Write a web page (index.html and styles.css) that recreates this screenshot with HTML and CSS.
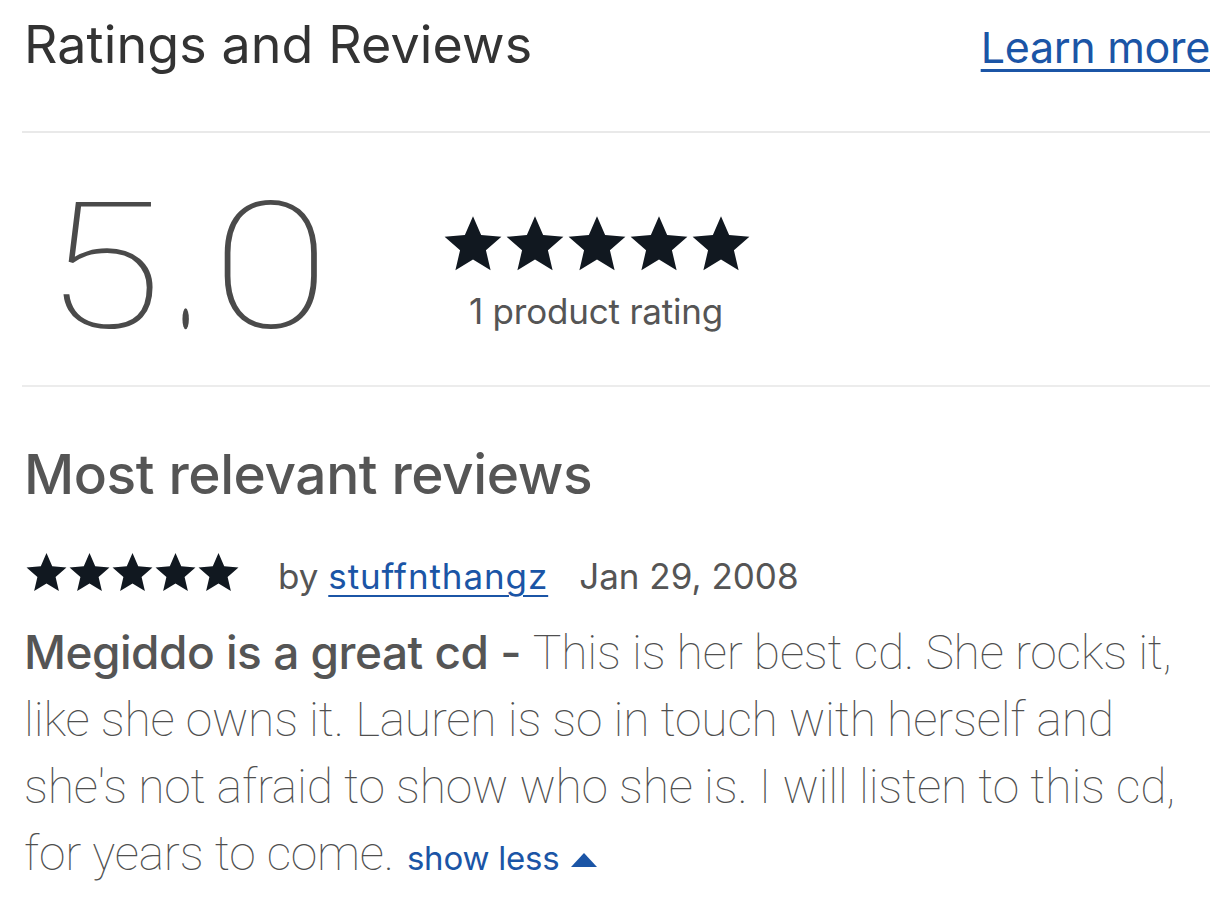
FILE: index.html
```html
<!DOCTYPE html>
<html lang="en">
<head>
<meta charset="utf-8">
<title>Ratings and Reviews</title>
<link rel="stylesheet" href="styles.css">
</head>
<body>
<main class="page">
  <header class="head">
    <h2 class="title">Ratings and Reviews</h2>
    <a class="learn" href="#">Learn more</a>
  </header>
  <section class="summary">
    <div class="score">5<span class="dot">.</span>0</div>
    <div class="overall">
      <div class="stars big">
        <svg viewBox="0 0 24 24"><path d="M12 1.6l3.05 7.05 7.6.65-5.8 5.05 1.75 7.45L12 17.85 5.4 21.8l1.75-7.45-5.8-5.05 7.6-.65z"/></svg>
        <svg viewBox="0 0 24 24"><path d="M12 1.6l3.05 7.05 7.6.65-5.8 5.05 1.75 7.45L12 17.85 5.4 21.8l1.75-7.45-5.8-5.05 7.6-.65z"/></svg>
        <svg viewBox="0 0 24 24"><path d="M12 1.6l3.05 7.05 7.6.65-5.8 5.05 1.75 7.45L12 17.85 5.4 21.8l1.75-7.45-5.8-5.05 7.6-.65z"/></svg>
        <svg viewBox="0 0 24 24"><path d="M12 1.6l3.05 7.05 7.6.65-5.8 5.05 1.75 7.45L12 17.85 5.4 21.8l1.75-7.45-5.8-5.05 7.6-.65z"/></svg>
        <svg viewBox="0 0 24 24"><path d="M12 1.6l3.05 7.05 7.6.65-5.8 5.05 1.75 7.45L12 17.85 5.4 21.8l1.75-7.45-5.8-5.05 7.6-.65z"/></svg>
      </div>
      <div class="count">1 product rating</div>
    </div>
  </section>
  <section class="reviews">
    <h3 class="sub">Most relevant reviews</h3>
    <div class="meta">
      <div class="stars small">
        <svg viewBox="0 0 24 24"><path d="M12 1.6l3.05 7.05 7.6.65-5.8 5.05 1.75 7.45L12 17.85 5.4 21.8l1.75-7.45-5.8-5.05 7.6-.65z"/></svg>
        <svg viewBox="0 0 24 24"><path d="M12 1.6l3.05 7.05 7.6.65-5.8 5.05 1.75 7.45L12 17.85 5.4 21.8l1.75-7.45-5.8-5.05 7.6-.65z"/></svg>
        <svg viewBox="0 0 24 24"><path d="M12 1.6l3.05 7.05 7.6.65-5.8 5.05 1.75 7.45L12 17.85 5.4 21.8l1.75-7.45-5.8-5.05 7.6-.65z"/></svg>
        <svg viewBox="0 0 24 24"><path d="M12 1.6l3.05 7.05 7.6.65-5.8 5.05 1.75 7.45L12 17.85 5.4 21.8l1.75-7.45-5.8-5.05 7.6-.65z"/></svg>
        <svg viewBox="0 0 24 24"><path d="M12 1.6l3.05 7.05 7.6.65-5.8 5.05 1.75 7.45L12 17.85 5.4 21.8l1.75-7.45-5.8-5.05 7.6-.65z"/></svg>
      </div>
      <span class="by">by <a class="user" href="#">stuffnthangz</a></span>
      <span class="date">Jan 29, 2008</span>
    </div>
    <p class="body"><strong class="rtitle">Megiddo is a great cd - </strong><span class="rtext">This is her best cd. She rocks it,<br>like she owns it. Lauren is so in touch with herself and<br>she's not afraid to show who she is. I will listen to this cd,<br>for years to come.</span> <a class="less" href="#">show less <span class="caret"></span></a></p>
  </section>
</main>
</body>
</html>
```
FILE: styles.css
```css
html, body {
  margin: 0;
  padding: 0;
  background: #ffffff;
}
body {
  font-family: "Inter", "Liberation Sans", Arial, sans-serif;
  color: #333333;
}
.page {
  width: 1188px;
  padding: 0 14px 0 22px;
}
.head {
  display: flex;
  justify-content: space-between;
  align-items: baseline;
  height: 133px;
  border-bottom: 2px solid #e9e9e9;
  box-sizing: border-box;
}
.title {
  margin: 0;
  padding: 15px 0 0 2px;
  font-weight: 400;
  font-size: 52px;
  line-height: 60px;
  color: #333;
  letter-spacing: 0.1px;
}
.learn {
  font-size: 43px;
  line-height: 60px;
  color: #1b55a6;
  text-decoration: underline;
  text-decoration-thickness: 3px;
  text-underline-offset: 6px;
  letter-spacing: -0.3px;
}
.summary {
  display: flex;
  align-items: center;
  height: 254px;
  border-bottom: 2px solid #ececec;
  box-sizing: border-box;
}
.score {
  font-family: "Roboto", sans-serif;
  font-weight: 100;
  font-size: 176px;
  line-height: 176px;
  color: #4a4a4a;
  padding-left: 18px;
  width: 403px;
  margin-top: 16px;
  transform: scaleX(1.23);
  transform-origin: left center;
  letter-spacing: 0;
}
.dot {
  display: inline-block;
  line-height: 40px;
  transform: scale(0.55, 2.2);
  transform-origin: 50% 79px;
  margin: 0 1px;
}
.overall {
  display: flex;
  flex-direction: column;
  align-items: center;
  width: 310px;
  margin-left: -2px;
  margin-top: 26px;
}
.stars {
  display: flex;
}
.stars svg {
  fill: #111820;
  display: block;
}
.stars.big svg {
  width: 64px;
  height: 64px;
  margin-right: -2px;
}
.count {
  font-size: 35px;
  color: #555;
  margin-top: 14px;
  letter-spacing: -0.2px;
}
.sub {
  margin: 0;
  padding: 54px 0 0 2px;
  font-size: 55px;
  line-height: 66px;
  font-weight: 500;
  color: #555;
  letter-spacing: -0.4px;
}
.meta {
  display: flex;
  align-items: center;
  margin-top: 48px;
  padding-left: 2px;
  font-size: 35px;
  color: #555;
}
.stars.small svg {
  width: 45px;
  height: 45px;
  margin-right: -2px;
}
.stars.small {
  margin-top: -8px;
}
.by {
  margin-left: 39px;
}
.user {
  color: #1b55a6;
  text-decoration: underline;
  text-decoration-thickness: 2px;
  text-underline-offset: 6px;
  letter-spacing: 0.9px;
}
.date {
  margin-left: 31px;
}
.body {
  margin: 22px 0 0 2px;
  font-size: 46px;
  line-height: 67px;
  color: #555;
}
.rtitle {
  font-weight: 500;
  letter-spacing: -0.5px;
}
.rtext {
  font-family: "Roboto", sans-serif;
  font-weight: 100;
  font-size: 48px;
  letter-spacing: -0.2px;
  color: #4f4f4f;
}
.less {
  font-size: 33px;
  color: #1b55a6;
  text-decoration: none;
  letter-spacing: -0.2px;
}
.caret {
  display: inline-block;
  width: 0;
  height: 0;
  border-left: 13px solid transparent;
  border-right: 13px solid transparent;
  border-bottom: 14px solid #1b55a6;
  vertical-align: 3px;
  margin-left: 2px;
}
```
